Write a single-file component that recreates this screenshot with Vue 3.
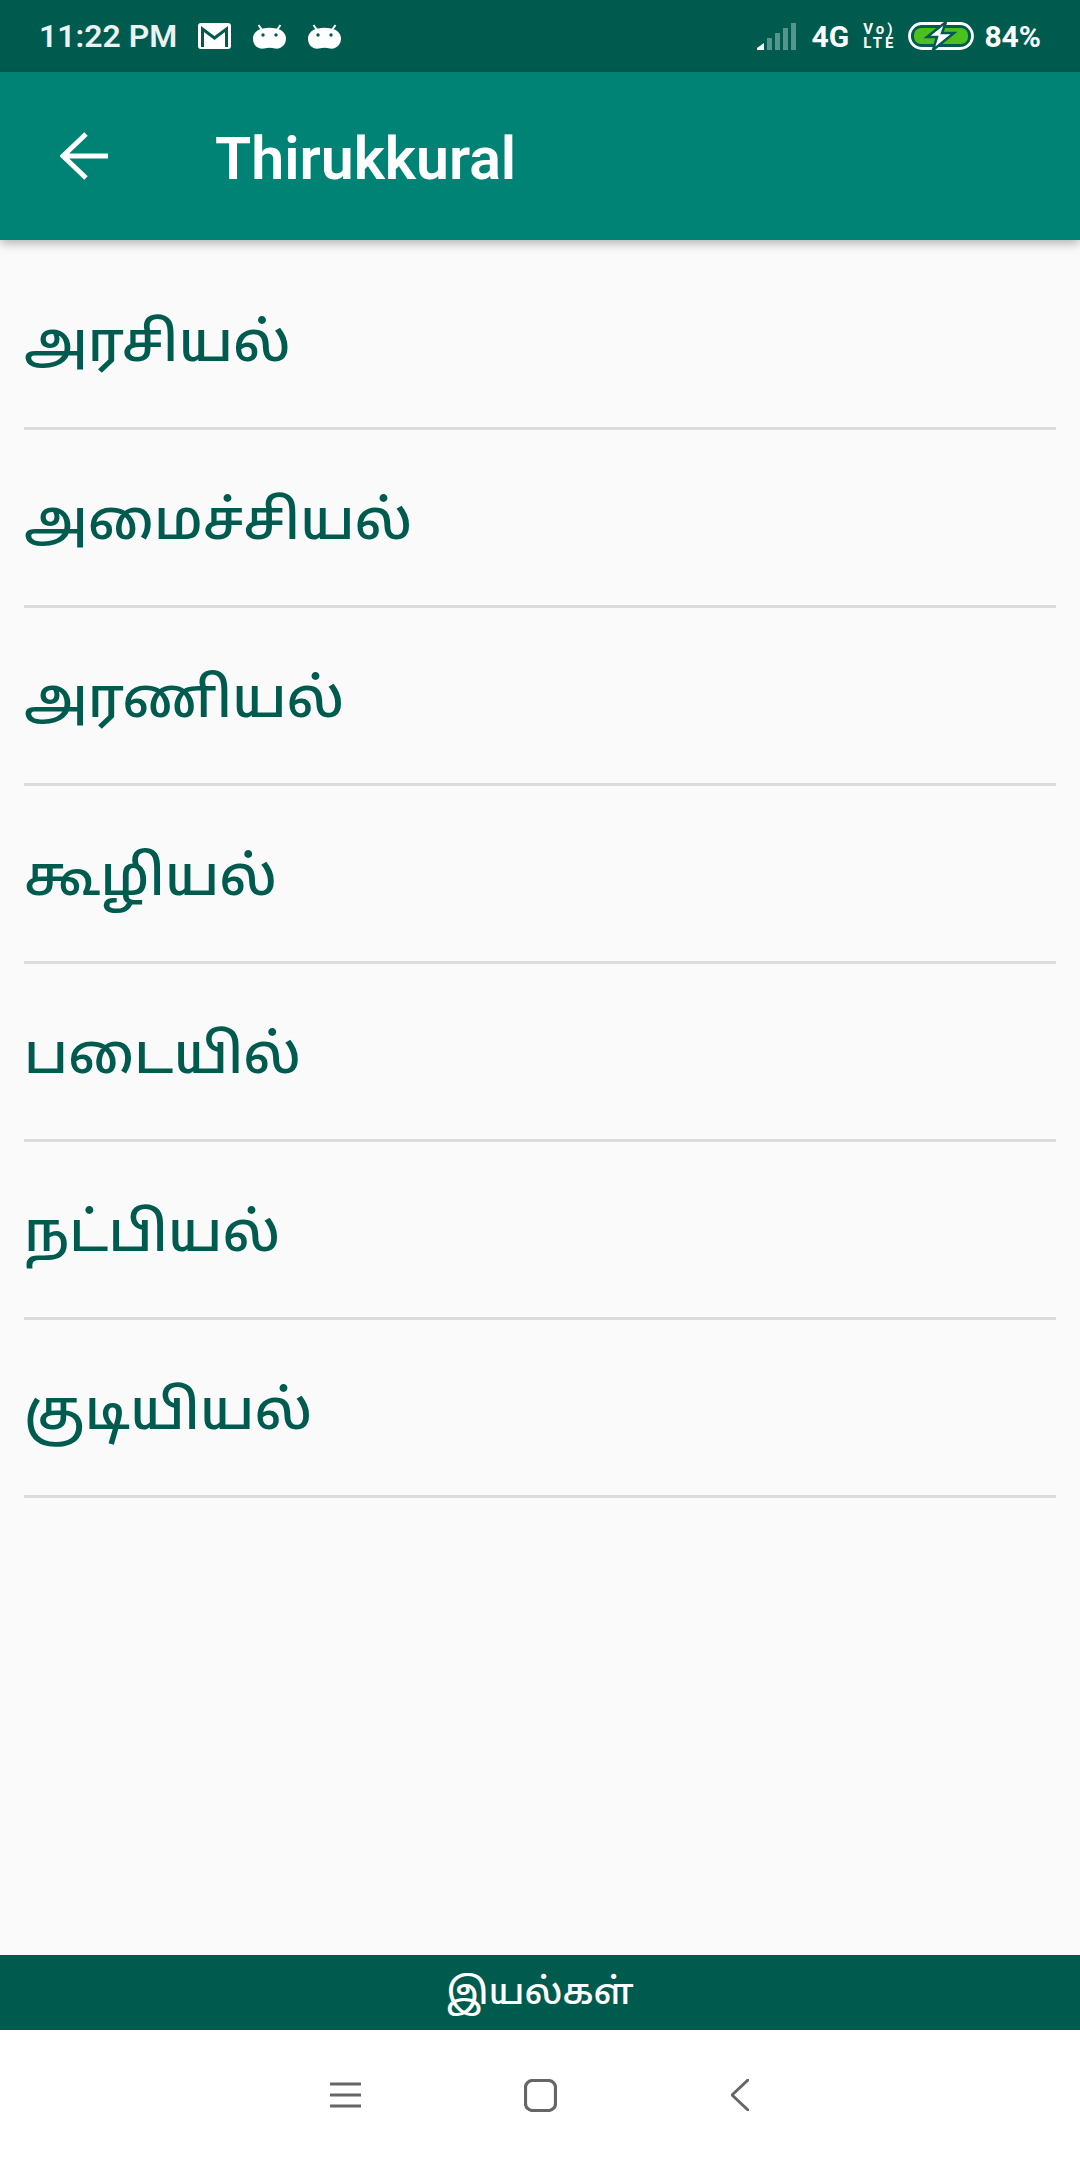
<script setup>
const chapters = ['அரசியல்', 'அமைச்சியல்', 'அரணியல்', 'கூழியல்', 'படையில்', 'நட்பியல்', 'குடியியல்']
</script>

<template>
  <div class="screen">
    <header class="status">
      <div class="status-left">
        <span class="time">11:22 PM</span>
        <svg class="ic-mail" width="33" height="26" viewBox="0 0 33 26">
          <rect width="33" height="26" rx="3" fill="#fff" />
          <path d="M4.500 24V6L16.500 15 28.500 6V24" fill="none" stroke="#005b4f" stroke-width="3" />
        </svg>
        <svg v-for="n in 2" :key="n" class="ic-droid" width="33" height="25" viewBox="0 0 33 25">
          <path d="M9 6L5.500 1M24 6l3.500-5" stroke="#fff" stroke-width="2" fill="none" />
          <path d="M10 4.500c4-1 9-1 13 0 6 1 10 5 10 10 0 7-6 11-11 10-4-1-7-1-11 0C5 25.500 0 21.500 0 14.500 0 9.500 4 5.500 10 4.500z" fill="#fff" />
          <circle cx="10" cy="11" r="1.700" fill="#005b4f" />
          <circle cx="23" cy="11" r="1.700" fill="#005b4f" />
        </svg>
      </div>
      <div class="status-right">
        <svg class="ic-signal" width="39" height="27" viewBox="0 0 39 27">
          <path d="M0 27v-2l7-5v7z" fill="#fff" />
          <g fill="#fff" opacity=".35">
            <rect x="10" y="15" width="5" height="12" />
            <rect x="18" y="10" width="5" height="17" />
            <rect x="26" y="5" width="5" height="22" />
            <rect x="34" y="0" width="5" height="27" />
          </g>
        </svg>
        <span class="net">4G</span>
        <span class="volte"><span>Vo)</span><span>LTE</span></span>
        <svg class="ic-batt" width="66" height="28" viewBox="0 0 66 28">
          <rect x="1.500" y="1.500" width="63" height="25" rx="12.500" fill="none" stroke="#fff" stroke-width="2.800" />
          <rect x="6" y="6" width="54" height="16" rx="7" fill="#4cc01e" />
          <path d="M38 0L19 15h10l-4 13 21-17H34z" fill="#fff" stroke="#005b4f" stroke-width="2.500" />
        </svg>
        <span class="pct">84%</span>
      </div>
    </header>

    <div class="appbar">
      <svg class="ic-back" width="48" height="48" viewBox="0 0 48 48">
        <path d="M48 24H3M26 2L3 24l23 22" fill="none" stroke="#fff" stroke-width="5" />
      </svg>
      <h1 class="title">Thirukkural</h1>
    </div>

    <main class="list">
      <div v-for="c in chapters" :key="c" class="row">{{ c }}</div>
    </main>

    <div class="tabbar">இயல்கள்</div>

    <nav class="navbar">
      <svg class="nav-menu" width="31" height="26" viewBox="0 0 31 26">
        <path d="M0 2h31M0 13h31M0 24h31" stroke="#666" stroke-width="3" fill="none" />
      </svg>
      <svg class="nav-home" width="33" height="33" viewBox="0 0 33 33">
        <rect x="1.500" y="1.500" width="30" height="30" rx="7" fill="none" stroke="#666" stroke-width="3.200" />
      </svg>
      <svg width="18" height="32" viewBox="0 0 18 32">
        <path d="M17 1L1 16l16 15" fill="none" stroke="#666" stroke-width="3" stroke-linecap="round" />
      </svg>
    </nav>
  </div>
</template>

<style>
html, body { margin: 0; padding: 0; }
</style>

<style scoped>
.screen {
  width: 1080px;
  height: 2160px;
  display: flex;
  flex-direction: column;
  background: #fafafa;
  font-family: Roboto, "Noto Sans Tamil", "Noto Sans", sans-serif;
  overflow: hidden;
}
.status {
  height: 72px;
  flex: none;
  background: #005b4f;
  color: #fff;
  display: flex;
  justify-content: space-between;
  align-items: center;
  padding: 0 39px;
  box-sizing: border-box;
  font-weight: 500;
}
.status-left, .status-right { display: flex; align-items: center; }
.time { font-size: 32px; font-weight: 600; color: #ecf2f1; margin-right: 21px; }
.ic-droid { margin-left: 22px; }
.ic-signal { margin-right: 16px; }
.net { font-size: 30px; font-weight: 700; margin-right: 14px; }
.volte { display: flex; flex-direction: column; font-size: 15px; line-height: 14px; font-weight: 700; margin-right: 12px; letter-spacing: 3px; }
.pct { font-size: 30px; font-weight: 700; margin-left: 10px; }
.appbar {
  height: 168px;
  flex: none;
  background: #008375;
  display: flex;
  align-items: center;
  padding-left: 60px;
  box-sizing: border-box;
  box-shadow: 0 3px 10px rgba(0, 0, 0, .3);
  position: relative;
}
.ic-back { flex: none; margin-right: 107px; }
.title { margin: 4px 0 0; font-size: 59px; font-weight: 600; color: #fff; }
.list { flex: 1; padding: 12px 24px 0; }
.row {
  height: 178px;
  box-sizing: border-box;
  border-bottom: 3px solid #dcdcdc;
  display: flex;
  align-items: center;
  padding-top: 11px;
  font-size: 55.400px;
  font-weight: 500;
  color: #005b4f;
}
.tabbar {
  height: 75px;
  flex: none;
  background: #005b4f;
  color: #fff;
  font-size: 36.500px;
  font-weight: 500;
  padding-top: 3px;
  box-sizing: border-box;
  display: flex;
  align-items: center;
  justify-content: center;
}
.navbar {
  height: 130px;
  flex: none;
  background: #fff;
  display: flex;
  align-items: center;
  justify-content: center;
  padding-right: 2px;
  box-sizing: border-box;
}
.nav-menu { margin-right: 163px; }
.nav-home { margin-right: 174px; }
</style>
